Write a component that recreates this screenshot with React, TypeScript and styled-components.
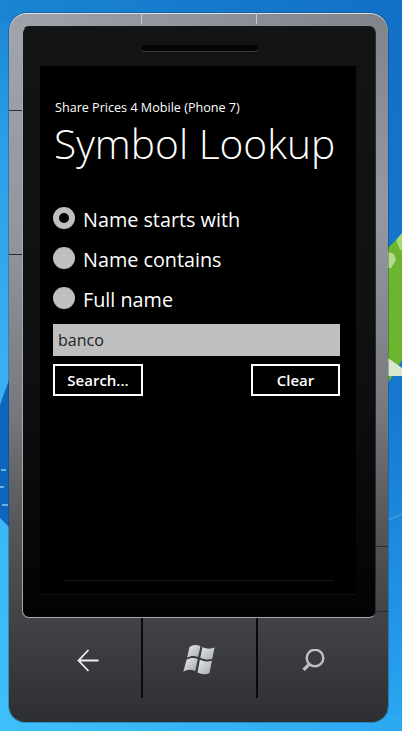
import React from "react";
import styled, { createGlobalStyle } from "styled-components";

const GlobalStyle = createGlobalStyle`
  html, body { margin: 0; padding: 0; background: #1a8ade; }
  * { box-sizing: border-box; }
`;

const Desktop = styled.div`
  position: relative;
  width: 402px;
  height: 731px;
  overflow: hidden;
  padding: 13px 14px 9px 9px;
  font-family: "Open Sans", "Noto Sans", sans-serif;
`;

const Wallpaper = styled.svg`
  position: absolute;
  inset: 0;
`;

const Phone = styled.div`
  position: relative;
  display: flex;
  flex-direction: column;
  width: 379px;
  height: 709px;
  border-radius: 18px 18px 16px 16px;
  background:
    linear-gradient(205deg, rgba(40, 40, 45, 0.28) 0%, rgba(40, 40, 45, 0) 22%),
    linear-gradient(180deg, #a2a5ac 0%, #92959d 32%, #77797e 56%, #56575a 72%, #414245 86%, #2e2f32 100%);
  box-shadow: inset 0 1px 0 #dfe1e5, 0 0 0 1px rgba(20, 40, 60, 0.3);
  padding: 13px 12px 0 13px;
`;

const TopSeam = styled.i<{ $left: number }>`
  position: absolute;
  top: 0;
  left: ${(p) => p.$left}px;
  width: 1px;
  height: 11px;
  background: #c4c6cb;
`;

const SideSeam = styled.i<{ $top: number; $right?: boolean }>`
  position: absolute;
  top: ${(p) => p.$top}px;
  ${(p) => (p.$right ? "right: 0;" : "left: 0;")}
  width: 13px;
  height: 1px;
  background: #2b2c2f;
`;

const Bezel = styled.div`
  display: flex;
  flex-direction: column;
  align-items: center;
  width: 354px;
  height: 592px;
  padding-top: 18px;
  border-radius: 7px;
  border: 1px solid #a6a8ac;
  border-top-color: #17181a;
  border-right-color: #2a2b2d;
  background: linear-gradient(180deg, #131415 0%, #0e0f10 60%, #030303 100%);
`;

const Speaker = styled.div`
  width: 117px;
  height: 6px;
  border-radius: 3px;
  background: #050505;
  box-shadow: 0 1px 0 #3a3b3d;
`;

const Screen = styled.div`
  display: flex;
  flex-direction: column;
  width: 316px;
  height: 528px;
  margin: 15px 2px 0 0;
  padding: 34px 16px 13px 13px;
  background: #000;
  color: #fff;
  box-shadow: 0 1px 0 #101112;
`;

const AppName = styled.div`
  margin-left: 2px;
  font-size: 12.6px;
  line-height: 16px;
  white-space: nowrap;
`;

const PageTitle = styled.h1`
  margin: 1px 0 0 1px;
  font-size: 40.7px;
  font-weight: 300;
  line-height: 52px;
  white-space: nowrap;
`;

const Options = styled.div`
  display: flex;
  flex-direction: column;
  gap: 10px;
  margin-top: 35px;
`;

const Option = styled.div`
  display: flex;
  align-items: center;
  gap: 8px;
  height: 30px;
  font-size: 19.8px;
`;

const Radio = styled.span<{ $checked?: boolean }>`
  width: 22px;
  height: 22px;
  margin-bottom: 2px;
  border-radius: 50%;
  background: #bfbfbf;
  display: flex;
  align-items: center;
  justify-content: center;
  &::after {
    content: "";
    width: 10px;
    height: 10px;
    border-radius: 50%;
    background: ${(p) => (p.$checked ? "#000" : "transparent")};
  }
`;

const SearchBox = styled.div`
  height: 32px;
  margin-top: 10px;
  padding-left: 5px;
  background: #bfbfbf;
  color: #222;
  font-size: 16px;
  line-height: 32px;
`;

const Actions = styled.div`
  display: flex;
  justify-content: space-between;
  margin-top: 8px;
`;

const ActionButton = styled.button<{ $width: number }>`
  width: ${(p) => p.$width}px;
  height: 32px;
  padding: 0;
  background: #000;
  border: 2px solid #fff;
  color: #fff;
  font-family: inherit;
  font-size: 15px;
  font-weight: 600;
`;

const AppBarLine = styled.div`
  height: 1px;
  margin: auto 6px 0 11px;
  background: #0b1c28;
`;

const KeyRow = styled.div`
  display: grid;
  grid-template-columns: 132px 115px 132px;
  margin: 0 -12px 0 -13px;
  height: 80px;
`;

const Key = styled.div<{ $divider?: boolean; $shift: number }>`
  display: flex;
  align-items: center;
  justify-content: center;
  padding-top: 4px;
  padding-left: ${(p) => Math.max(p.$shift, 0)}px;
  padding-right: ${(p) => Math.max(-p.$shift, 0)}px;
  border-left: ${(p) => (p.$divider ? "2px solid #08090a" : "none")};
`;

const Back = () => (
  <svg width="22" height="23" viewBox="0 0 22 23" fill="none" stroke="#f0f0f0" strokeWidth="1.8">
    <path d="M21.5 11.5H3M11.5 1L1.5 11.5L11.5 22" />
  </svg>
);

const WinFlag = () => (
  <svg width="35" height="32" viewBox="0 0 34 32">
    <defs>
      <linearGradient id="flag" x1="0" y1="0" x2="1" y2="1">
        <stop offset="0" stopColor="#e6e8ea" />
        <stop offset="1" stopColor="#a9acb0" />
      </linearGradient>
    </defs>
    <g fill="url(#flag)">
      <path d="M7 3C10 .5 14 .3 18 2L15.6 13C12 11.4 8 11.6 4.6 13.6Z" />
      <path d="M20 3C23.5 5 28 5.2 32 3.6L29.8 14.8C26 16.2 21.6 15.6 17.8 13.8Z" />
      <path d="M4.2 15.6C7.6 13.6 11.5 13.4 15.2 15L12.8 27C9 25.4 4.8 25.4 .8 27.4Z" />
      <path d="M17.4 15.8C21.2 17.6 25.5 18.2 29.4 16.8L27 29C23.5 31 19 30.4 15 28.6Z" />
    </g>
  </svg>
);

const Lens = () => (
  <svg width="23" height="22" viewBox="0 0 23 22" fill="none" stroke="#bdbfc1">
    <circle cx="13" cy="9" r="8.3" strokeWidth="2.4" />
    <path d="M7.5 15L1.5 21" strokeWidth="3.2" />
  </svg>
);

export default function App() {
  return (
    <Desktop>
      <GlobalStyle />
      <Wallpaper width="402" height="731" viewBox="0 0 402 731">
        <defs>
          <linearGradient id="wall-left" x1="0" y1="0" x2="0" y2="1">
            <stop offset="0" stopColor="#1a84d4" />
            <stop offset="0.2" stopColor="#2aa0e6" />
            <stop offset="0.5" stopColor="#38b0f2" />
            <stop offset="1" stopColor="#3fc0fa" />
          </linearGradient>
          <linearGradient id="wall-right" x1="0" y1="0" x2="0" y2="1">
            <stop offset="0" stopColor="#1170c6" />
            <stop offset="0.55" stopColor="#1678cf" />
            <stop offset="0.8" stopColor="#1f90e2" />
            <stop offset="1" stopColor="#2ca8f2" />
          </linearGradient>
          <linearGradient id="wall-top" x1="0" y1="0" x2="1" y2="0">
            <stop offset="0" stopColor="#1a84d4" />
            <stop offset="1" stopColor="#1170c6" />
          </linearGradient>
          <linearGradient id="wall-bottom" x1="0" y1="0" x2="1" y2="0">
            <stop offset="0" stopColor="#3fc0fa" />
            <stop offset="1" stopColor="#2ca8f2" />
          </linearGradient>
        </defs>
        <rect width="201" height="731" fill="url(#wall-left)" />
        <rect x="201" width="201" height="731" fill="url(#wall-right)" />
        <rect width="402" height="20" fill="url(#wall-top)" />
        <rect y="715" width="402" height="16" fill="url(#wall-bottom)" />
        <path d="M0 405L9 380V527L0 518Z" fill="#0e66bb" />
        <path d="M1 470h5M0 487h4M2 505h6" stroke="#8fc8f2" strokeWidth="1.5" />
        <path d="M388 248L396 240L402 248V360L388 383Z" fill="#6cb52e" />
        <path d="M388 252L394 254L396 260L391 268H388Z" fill="#b6db8e" />
        <path d="M396 240L402 233V250L400 250Z" fill="#a6dc6c" />
        <path d="M388 358L402 368V376L388 376Z" fill="#dbe8cf" />
        <path d="M388 520L402 514" stroke="#5aa6e6" strokeWidth="1" />
      </Wallpaper>
      <Phone>
        <TopSeam $left={132} />
        <TopSeam $left={247} />
        <SideSeam $top={97} />
        <SideSeam $top={241} />
        <SideSeam $top={533} $right />
        <SideSeam $top={598} $right />
        <Bezel>
          <Speaker />
          <Screen>
            <AppName>Share Prices 4 Mobile (Phone 7)</AppName>
            <PageTitle>Symbol Lookup</PageTitle>
            <Options>
              <Option><Radio $checked />Name starts with</Option>
              <Option><Radio />Name contains</Option>
              <Option><Radio />Full name</Option>
            </Options>
            <SearchBox>banco</SearchBox>
            <Actions>
              <ActionButton $width={90}>Search...</ActionButton>
              <ActionButton $width={89}>Clear</ActionButton>
            </Actions>
            <AppBarLine />
          </Screen>
        </Bezel>
        <KeyRow>
          <Key $shift={25}><Back /></Key>
          <Key $divider $shift={0}><WinFlag /></Key>
          <Key $divider $shift={-20}><Lens /></Key>
        </KeyRow>
      </Phone>
    </Desktop>
  );
}
